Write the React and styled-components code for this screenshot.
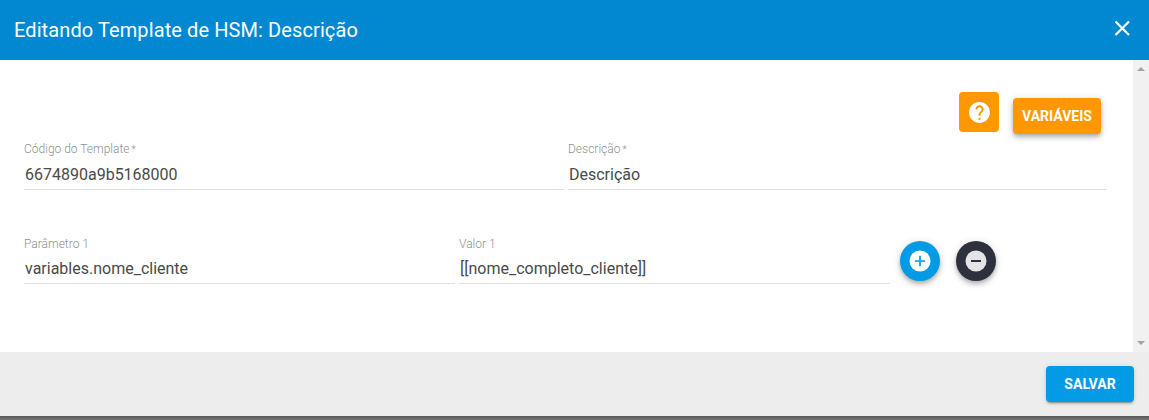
import React from 'react';
import styled, { createGlobalStyle } from 'styled-components';

const GlobalStyle = createGlobalStyle`
	html, body {
		margin: 0;
		padding: 0;
		background: #fff;
		font-family: Roboto, "Liberation Sans", sans-serif;
	}
`;

const Dialog = styled.div`
	width: 1149px;
	height: 420px;
	display: flex;
	flex-direction: column;
	overflow: hidden;
	background: linear-gradient(to bottom, #5c5c5c 416px, #5c5c5c 417px, #787878 420px);
`;

const Header = styled.header`
	height: 60px;
	flex: none;
	display: flex;
	align-items: center;
	justify-content: space-between;
	padding: 0 17px 0 14px;
	background: #0288d1;
	color: #fff;
`;

const Title = styled.h1`
	margin: 0;
	font-size: 20px;
	font-weight: 400;
	letter-spacing: 0.1px;
`;

const CloseIcon = styled.svg`
	display: block;
	width: 20px;
	height: 20px;
	margin-top: -4px;
`;

const Main = styled.div`
	flex: none;
	height: 292px;
	display: flex;
	background: #fff;
`;

const Content = styled.div`
	flex: 1;
	padding: 32px 26px 0 24px;
`;

const Actions = styled.div`
	display: flex;
	justify-content: flex-end;
	align-items: flex-start;
	gap: 14px;
	padding-right: 6px;
	height: 40px;
`;

const HelpButton = styled.button`
	width: 40px;
	height: 40px;
	padding: 0;
	border: 0;
	border-radius: 4px;
	background: #ff9800;
	display: flex;
	align-items: center;
	justify-content: center;
`;

const VarButton = styled.button`
	width: 88px;
	height: 36px;
	margin-top: 6px;
	padding: 0;
	border: 0;
	border-radius: 4px;
	background: #ff9800;
	color: #fff;
	font: 700 14px Roboto, sans-serif;
	box-shadow: 0 2px 4px -1px rgba(0, 0, 0, 0.2), 0 4px 5px rgba(0, 0, 0, 0.14), 0 1px 10px rgba(0, 0, 0, 0.12);
`;

const Row = styled.div`
	display: flex;
	gap: 4px;
	margin-top: ${(props) => props.$top}px;
`;

const Field = styled.div`
	width: ${(props) => props.$width}px;
	flex: none;
	border-bottom: 1px solid #e0e0e0;
	padding-bottom: 2px;
`;

const Label = styled.div`
	font-size: 12px;
	line-height: 14px;
	color: #8f8f8f;
	font-weight: 300;
`;

const Star = styled.span`
	margin-left: 2px;
	font-size: 10px;
`;

const Value = styled.div`
	margin-top: 6px;
	padding-left: 1px;
	font-size: 16px;
	line-height: 24px;
	font-weight: 400;
	color: #4a4a4a;
`;

const RoundButtons = styled.div`
	display: flex;
	gap: 16px;
	margin-left: 6px;
	margin-top: 4px;
`;

const RoundButton = styled.button`
	width: 40px;
	height: 40px;
	padding: 0;
	border: 0;
	border-radius: 50%;
	background: ${(props) => props.$bg};
	display: flex;
	align-items: center;
	justify-content: center;
	box-shadow: 0 2px 4px -1px rgba(0, 0, 0, 0.2), 0 4px 5px rgba(0, 0, 0, 0.14), 0 1px 10px rgba(0, 0, 0, 0.12);
`;

const Scrollbar = styled.div`
	width: 16px;
	flex: none;
	background: #f1f1f1;
	display: flex;
	flex-direction: column;
	justify-content: space-between;
	align-items: center;
	padding: 7px 0;
	box-sizing: border-box;
`;

const Arrow = styled.div`
	width: 0;
	height: 0;
	border-left: 4px solid transparent;
	border-right: 4px solid transparent;
	${(props) => (props.$down ? 'border-top: 4px solid #a3a3a3;' : 'border-bottom: 4px solid #a3a3a3;')}
`;

const Footer = styled.footer`
	flex: none;
	height: 64px;
	display: flex;
	align-items: center;
	justify-content: flex-end;
	padding-right: 15px;
	background: #ededed;
`;

const SaveButton = styled.button`
	width: 88px;
	height: 36px;
	padding: 0;
	border: 0;
	border-radius: 4px;
	background: #039be5;
	color: #fff;
	font: 700 14px Roboto, sans-serif;
	box-shadow: 0 3px 1px -2px rgba(0, 0, 0, 0.2), 0 2px 2px rgba(0, 0, 0, 0.14), 0 1px 5px rgba(0, 0, 0, 0.12);
`;

const App = () => {
	return (
		<Dialog>
			<GlobalStyle />
			<Header>
				<Title>Editando Template de HSM: Descrição</Title>
				<CloseIcon viewBox="0 0 20 20">
					<path d="M3.5 3.5 L17 17 M17 3.5 L3.5 17" stroke="#fff" strokeWidth="2.2" fill="none" />
				</CloseIcon>
			</Header>
			<Main>
				<Content>
					<Actions>
						<HelpButton>
							<svg width="25" height="25" viewBox="0 0 24 24">
								<path
									fill="#fff"
									d="M12 2C6.48 2 2 6.48 2 12s4.48 10 10 10 10-4.48 10-10S17.52 2 12 2zm1 17h-2v-2h2v2zm2.07-7.75l-.9.92C13.45 12.9 13 13.5 13 15h-2v-.5c0-1.1.45-2.1 1.17-2.83l1.24-1.26c.37-.36.59-.86.59-1.41 0-1.1-.9-2-2-2s-2 .9-2 2H8c0-2.21 1.79-4 4-4s4 1.79 4 4c0 .88-.36 1.68-.93 2.25z"
								/>
							</svg>
						</HelpButton>
						<VarButton>VARIÁVEIS</VarButton>
					</Actions>
					<Row $top={10}>
						<Field $width={540}>
							<Label>
								Código do Template<Star>*</Star>
							</Label>
							<Value>6674890a9b5168000</Value>
						</Field>
						<Field $width={539}>
							<Label>
								Descrição<Star>*</Star>
							</Label>
							<Value>Descrição</Value>
						</Field>
					</Row>
					<Row $top={47}>
						<Field $width={431}>
							<Label>Parâmetro 1</Label>
							<Value>variables.nome_cliente</Value>
						</Field>
						<Field $width={431}>
							<Label>Valor 1</Label>
							<Value>[[nome_completo_cliente]]</Value>
						</Field>
						<RoundButtons>
							<RoundButton $bg="#039be5">
								<svg width="24" height="24" viewBox="0 0 24 24">
									<circle cx="12" cy="12" r="10.5" fill="#fff" />
									<path d="M12 6.8 V17.2 M6.8 12 H17.2" stroke="#039be5" strokeWidth="1.7" fill="none" />
								</svg>
							</RoundButton>
							<RoundButton $bg="#2d303d">
								<svg width="24" height="24" viewBox="0 0 24 24">
									<circle cx="12" cy="12" r="10.5" fill="#e4e4e7" />
									<path d="M7 12 H17" stroke="#2d303d" strokeWidth="2" fill="none" />
								</svg>
							</RoundButton>
						</RoundButtons>
					</Row>
				</Content>
				<Scrollbar>
					<Arrow />
					<Arrow $down />
				</Scrollbar>
			</Main>
			<Footer>
				<SaveButton>SALVAR</SaveButton>
			</Footer>
		</Dialog>
	);
};

export default App;
